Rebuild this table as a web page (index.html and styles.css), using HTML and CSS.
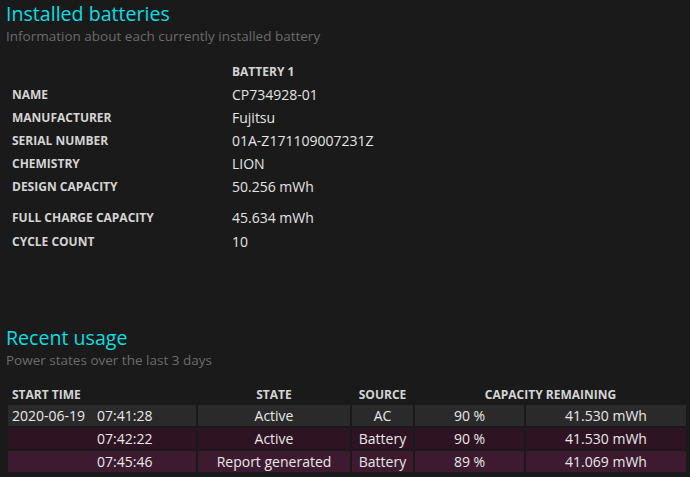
FILE: index.html
```html
<!DOCTYPE html>
<html>
<head>
<meta charset="utf-8">
<link rel="stylesheet" href="styles.css">
</head>
<body>
<section class="sec">
  <h1 class="title">Installed batteries</h1>
  <p class="sub">Information about each currently installed battery</p>
  <table class="info">
    <tr class="head"><td class="lbl"></td><td class="hd">BATTERY 1</td></tr>
    <tr><td class="lbl">NAME</td><td class="val">CP734928-01</td></tr>
    <tr><td class="lbl">MANUFACTURER</td><td class="val">Fujitsu</td></tr>
    <tr><td class="lbl">SERIAL NUMBER</td><td class="val">01A-Z171109007231Z</td></tr>
    <tr><td class="lbl">CHEMISTRY</td><td class="val">LION</td></tr>
    <tr><td class="lbl">DESIGN CAPACITY</td><td class="val">50.256 mWh</td></tr>
    <tr class="gap"><td class="lbl">FULL CHARGE CAPACITY</td><td class="val">45.634 mWh</td></tr>
    <tr><td class="lbl">CYCLE COUNT</td><td class="val">10</td></tr>
  </table>
</section>
<section class="sec recent">
  <h1 class="title">Recent usage</h1>
  <p class="sub">Power states over the last 3 days</p>
  <table class="usage">
    <colgroup><col class="c1"><col class="c2"><col class="c3"><col class="c4"><col class="c5"></colgroup>
    <thead>
      <tr><th class="left">START TIME</th><th>STATE</th><th>SOURCE</th><th colspan="2">CAPACITY REMAINING</th></tr>
    </thead>
    <tbody>
      <tr class="ac"><td class="left"><span class="date">2020-06-19</span>07:41:28</td><td>Active</td><td>AC</td><td>90 %</td><td>41.530 mWh</td></tr>
      <tr class="bat1"><td class="left"><span class="date"></span>07:42:22</td><td>Active</td><td>Battery</td><td>90 %</td><td>41.530 mWh</td></tr>
      <tr class="bat2"><td class="left"><span class="date"></span>07:45:46</td><td>Report generated</td><td>Battery</td><td>89 %</td><td>41.069 mWh</td></tr>
    </tbody>
  </table>
</section>
</body>
</html>
```
FILE: styles.css
```css
html, body {
  margin: 0;
  padding: 0;
  background: #1a1a1a;
  font-family: "Open Sans", "Noto Sans", sans-serif;
  color: #e2e2e2;
}
.sec {
  padding: 1px 0 0 6px;
}
.title {
  margin: 0;
  font-size: 19.6px;
  font-weight: 400;
  line-height: 26px;
  color: #08dfe2;
}
.sub {
  margin: 0;
  font-size: 13.5px;
  line-height: 18px;
  color: #6b6b6b;
}
.info {
  border-collapse: collapse;
  margin-top: 15px;
}
.info td {
  padding: 0;
  height: 23px;
  vertical-align: middle;
}
.info .lbl {
  width: 220px;
  padding-left: 6px;
  font-size: 12px;
  font-weight: 700;
  color: #d4d4d4;
}
.info .hd {
  font-size: 12px;
  font-weight: 700;
  color: #d4d4d4;
}
.info .val {
  font-size: 14px;
  color: #e4e4e4;
}
.info .gap td {
  padding-top: 8px;
}
.info .gap + tr td {
  padding-top: 1px;
}
.recent {
  margin-top: 71px;
}
.usage {
  border-collapse: separate;
  border-spacing: 2px;
  margin-top: 14px;
  table-layout: fixed;
  width: 682px;
}
.c1 { width: 188px; }
.c2 { width: 152px; }
.c3 { width: 61px; }
.c4 { width: 109px; }
.c5 { width: 160px; }
.usage th {
  font-size: 12px;
  font-weight: 700;
  color: #d4d4d4;
  height: 18px;
  padding: 0;
  text-align: center;
}
.usage td {
  font-size: 14px;
  height: 21px;
  padding: 0;
  text-align: center;
  color: #e8e8e8;
  white-space: nowrap;
}
.usage .left {
  text-align: left;
  padding-left: 4px;
}
.date {
  display: inline-block;
  width: 85px;
}
.ac td { background: #2a2a2a; }
.bat1 td { background: #2e1422; }
.bat2 td { background: #3d1a2f; }
```
